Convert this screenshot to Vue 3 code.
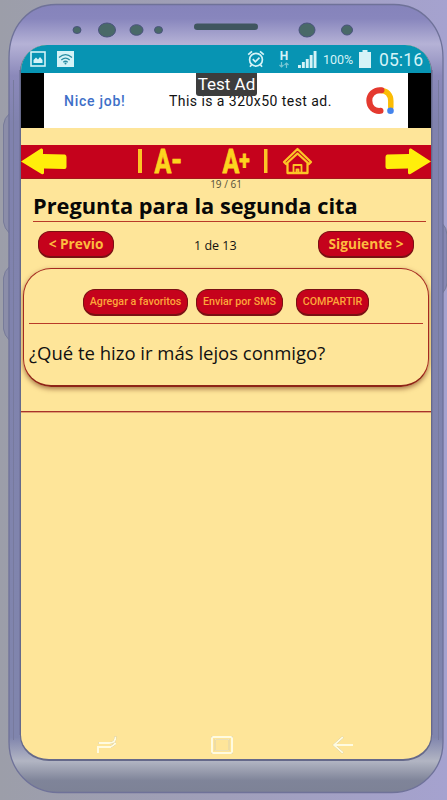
<script setup>
const bars = [3, 6, 9, 13, 17]
const actions = [
  { label: 'Agregar a favoritos', cls: 'fav' },
  { label: 'Enviar por SMS', cls: 'sms' },
  { label: 'COMPARTIR', cls: 'share' },
]
</script>

<template>
  <div class="stage">
    <svg class="body" width="447" height="800" viewBox="0 0 447 800">
      <defs>
        <linearGradient id="bg" x1="0" y1="0" x2="1" y2="0">
          <stop offset="0" stop-color="#9c9ea9" />
          <stop offset=".5" stop-color="#a09fba" />
          <stop offset="1" stop-color="#a5a2cf" />
        </linearGradient>
        <linearGradient id="shell" x1="0" y1="0" x2="0" y2="1">
          <stop offset="0" stop-color="#8583bb" />
          <stop offset=".018" stop-color="#8886bd" />
          <stop offset=".05" stop-color="#b5b2d6" />
          <stop offset=".09" stop-color="#8b89ba" />
          <stop offset=".15" stop-color="#8082ae" />
          <stop offset=".93" stop-color="#8085ad" />
          <stop offset=".96" stop-color="#b2b5c3" />
          <stop offset=".985" stop-color="#7f8499" />
          <stop offset="1" stop-color="#7d8296" />
        </linearGradient>
      </defs>
      <rect width="447" height="800" fill="url(#bg)" />
      <g fill="#8b8da9" stroke="#777b99" stroke-width="1">
        <path d="M10 113Q4 118 3.500 125V222Q4 228 10 234Z" />
        <path d="M10 266Q4 271 3.500 278V329Q4 335 10 341Z" />
        <path d="M442 223Q447 228 447 235V283Q447 288 442 294Z" fill="#8888b3" />
      </g>
      <path d="M56 4.500H394C421 4.500 443 26 443 58V742C443 770 421 792.500 392 792.500H58C30 792.500 9 770 9 742V58C9 26 29 4.500 56 4.500Z" fill="url(#shell)" stroke="#6f7299" stroke-width="1.300" />
      <path d="M13.500 80V740M438.500 80V740" stroke="#777a9d" stroke-width="1" />
      <path d="M20 70V735M432 70V735" stroke="#7779a1" stroke-width="2" />
      <g fill="#496968" stroke="#49547c">
        <ellipse cx="77" cy="30" rx="4" ry="3.500" />
        <ellipse cx="107" cy="30" rx="8.500" ry="7" />
        <ellipse cx="136.500" cy="30" rx="6.500" ry="5.300" />
        <ellipse cx="158.500" cy="30" rx="4" ry="3.500" />
        <ellipse cx="307" cy="30" rx="8" ry="7" />
        <ellipse cx="347" cy="30" rx="5.500" ry="5" />
      </g>
      <rect x="194" y="23.500" width="64" height="6.500" rx="3.200" fill="#40565f" />
    </svg>

    <main class="screen">
      <header class="status">
        <svg class="photo" width="16" height="16" viewBox="0 0 16 16">
          <rect x="1" y="1" width="14" height="14" fill="none" stroke="#d5f3f7" stroke-width="1.600" />
          <path d="M3.500 12V9L6 6.500 8 8.500 10 6 12.500 9V12Z" fill="#d5f3f7" />
        </svg>
        <svg class="wifi" width="17" height="16" viewBox="0 0 17 16">
          <rect width="17" height="16" fill="#d5f3f7" />
          <g fill="none" stroke="#2a8ea3" stroke-width="1.300">
            <path d="M2 6.500Q8.500 .8 15 6.500M4.300 9Q8.500 5.300 12.700 9M6.300 11.200Q8.500 9.300 10.700 11.200" />
          </g>
          <circle cx="8.500" cy="12.500" r="1" fill="#2a8ea3" />
        </svg>
        <svg class="alarm" width="18" height="18" viewBox="0 0 18 18" fill="none" stroke="#d5f3f7" stroke-width="1.700">
          <circle cx="9" cy="9.700" r="6.400" />
          <path d="M5.800 9.200 8.300 11.800 12.500 7.700M1.200 4.600 5 1.300M16.800 4.600 13 1.300M4.700 14.500 3 16.800M13.300 14.500 15 16.800" />
        </svg>
        <div class="net">
          <b>H</b>
          <svg width="10" height="6" viewBox="0 0 10 6" fill="none" stroke="#79c6d3" stroke-width="1.200">
            <path d="M2.500 0V5M.5 3 2.500 5 4.500 3M7.500 6V1M5.500 3 7.500 1 9.500 3" />
          </svg>
        </div>
        <svg class="signal" width="19" height="18" viewBox="0 0 19 18">
          <rect v-for="(h, i) in bars" :key="h" :x="i * 3.900" :y="18 - h" width="2.900" :height="h" fill="#d5f3f7" />
        </svg>
        <span class="pct">100%</span>
        <svg class="batt" width="12" height="18" viewBox="0 0 12 18">
          <path d="M3.500 0H8.500V2H12V18H0V2H3.500Z" fill="#d5f3f7" />
        </svg>
        <span class="clock">05:16</span>
      </header>

      <section class="ad">
        <div class="banner">
          <span class="nice">Nice job!</span>
          <span class="adtext">This is a 320x50 test ad.</span>
          <svg class="admob" width="29" height="28" viewBox="0 0 29 28" fill="none" stroke-linecap="round">
            <path d="M14 3.500C21 3.200 24.800 8 24.800 14V20" stroke="#fbbc04" stroke-width="5.500" />
            <path d="M15.500 3.300C7.500 2.500 3.300 8.300 3.300 13.500 3.300 20 8 24.500 14.500 23.800" stroke="#e4392f" stroke-width="6" />
            <circle cx="24.500" cy="23.800" r="3.300" fill="#4484ec" />
          </svg>
        </div>
        <span class="tag">Test Ad</span>
      </section>

      <nav class="toolbar">
        <svg class="arrow" width="46" height="27" viewBox="0 0 46 27">
          <path d="M0 13.500 20 .5Q22 0 22 2V6L44 6.500Q45.500 7 45.500 9V19Q45.500 21 43.500 21L23 20.500V25Q22.500 27 20.500 26Z" fill="#ffee0b" />
        </svg>
        <svg class="tools" width="182" height="34" viewBox="0 0 182 34">
          <rect x="1" y="4" width="4" height="24" fill="#fcc526" />
          <text transform="translate(17.500 28) scale(.76 1)" class="a">A<tspan class="minus" dy="-1.500">-</tspan></text>
          <text transform="translate(85.500 28) scale(.76 1)" class="a">A<tspan class="plus" dy="-4">+</tspan></text>
          <rect x="127" y="4" width="3.500" height="24" fill="#fcc526" />
          <g fill="none" stroke="#fcc526" stroke-width="2.300" stroke-linejoin="round" stroke-linecap="round">
            <path d="M147 17 160.500 4 174 17 172 19 160.500 8.500 149 19ZM150.500 18.500V28H170.500V18.500" />
            <path d="M156.500 28V20H164.500V28M159.500 28V24.500H161.500V28" stroke-width="1.800" />
          </g>
        </svg>
        <svg class="arrow flip" width="46" height="27" viewBox="0 0 46 27">
          <path d="M0 13.500 20 .5Q22 0 22 2V6L44 6.500Q45.500 7 45.500 9V19Q45.500 21 43.500 21L23 20.500V25Q22.500 27 20.500 26Z" fill="#ffee0b" />
        </svg>
      </nav>

      <div class="page">19 / 61</div>
      <h1>Pregunta para la segunda cita</h1>
      <div class="pager">
        <button class="pill prev">&lt; Previo</button>
        <span class="count">1 de 13</span>
        <button class="pill next">Siguiente &gt;</button>
      </div>

      <article class="card">
        <div class="actions">
          <button v-for="a in actions" :key="a.label" class="pill small" :class="a.cls">{{ a.label }}</button>
        </div>
        <p>¿Qué te hizo ir más lejos conmigo?</p>
      </article>
      <div class="rule"></div>

      <footer class="keys">
        <svg width="24" height="22" viewBox="0 0 24 22"><path d="M3 19V13H15.500L20 10V8.500M3.500 9H14.500Q20.500 9 20.500 2.500" /></svg>
        <svg width="24" height="22" viewBox="0 0 24 22"><rect x="2" y="3" width="20" height="16" rx="1" /><rect x="5" y="5.500" width="14" height="11" class="thin" /></svg>
        <svg width="24" height="22" viewBox="0 0 24 22"><path d="M22 11H3M12 3 3 11 12 19" /></svg>
      </footer>
    </main>
  </div>
</template>

<style>
body { margin: 0; overflow: hidden; }
</style>

<style scoped>
.stage {
  position: relative;
  box-sizing: border-box;
  width: 447px;
  height: 800px;
  padding: 45px 16px 41px 21px;
  overflow: hidden;
  font-family: "Open Sans", sans-serif;
  color: #111;
}
.body { position: absolute; inset: 0; }
.screen {
  position: relative;
  display: flex;
  flex-direction: column;
  width: 410px;
  height: 714px;
  border-radius: 26px 26px 28px 28px / 26px 26px 24px 24px;
  overflow: hidden;
  background: #fee599;
  box-shadow: 0 1px 0 1px #65698a;
}
.status {
  display: flex;
  align-items: center;
  height: 28px;
  flex: none;
  background: #0794b3;
  color: #d5f3f7;
  font-family: Roboto, sans-serif;
  white-space: nowrap;
}
.status > * { flex: none; }
.photo { margin-left: 9px; }
.wifi { margin-left: 11px; }
.alarm { margin-left: 173px; }
.net { display: flex; flex-direction: column; align-items: center; width: 12px; margin-left: 13px; }
.net b { font-size: 12px; line-height: 11px; }
.signal { margin-left: 8px; }
.pct { width: 33px; margin-left: 6px; font-size: 12.500px; }
.batt { margin-left: 3px; }
.clock { margin-left: 8px; margin-top: 1px; font-size: 17.500px; letter-spacing: .1px; }
.ad {
  position: relative;
  display: flex;
  flex: none;
  height: 55px;
  padding: 0 23px;
  background: #000;
}
.banner { display: flex; align-items: center; width: 364px; height: 55px; background: #fff; white-space: nowrap; }
.nice { width: 61px; margin-left: 20px; color: #3e6fc8; font: 500 14px Roboto, sans-serif; letter-spacing: .75px; }
.adtext { width: 162px; margin-left: 44px; font: 14px Roboto, sans-serif; letter-spacing: .45px; }
.admob { margin-left: 35px; }
.tag {
  position: absolute;
  left: 175px;
  top: 0;
  width: 61px;
  height: 23px;
  border-radius: 0 0 3px 3px;
  background: #3d3d3d;
  color: #fff;
  font: 17px/23px Roboto, sans-serif;
  text-align: center;
  white-space: nowrap;
}
.toolbar {
  display: flex;
  flex: none;
  align-items: center;
  height: 33px;
  margin-top: 17px;
  background: #c5021c;
  border-bottom: 1px solid #a5161b;
}
.tools { margin-left: 70px; overflow: visible; }
.flip { margin-left: 66px; transform: scaleX(-1); }
.a { font: 700 33px Roboto, sans-serif; fill: #fdd41f; stroke: #fdd41f; stroke-width: .9px; }
.minus { font-size: 36px; }
.plus { font-size: 25px; }
.page { height: 12px; flex: none; text-align: center; font-size: 10px; line-height: 11px; color: #555038; }
h1 {
  margin: 0 5px 0 12px;
  flex: none;
  height: 30px;
  border-bottom: 2px solid #d08258;
  border-bottom-width: 1px;
  border-bottom-color: #b83a28;
  font-size: 21.800px;
  line-height: 29px;
  font-weight: 700;
  color: #080808;
  white-space: nowrap;
}
.pager { display: flex; flex: none; align-items: center; height: 27px; margin: 9px 17px 0; }
.pill {
  box-sizing: border-box;
  padding: 0 0 1px;
  border: 1.500px solid #7a1013;
  border-bottom-width: 2px;
  border-radius: 12px;
  background: #c5021c;
  color: #fdbb3f;
  font: 700 13.700px "Open Sans", sans-serif;
  white-space: nowrap;
}
.prev { width: 76px; height: 27px; }
.next { width: 96px; height: 27px; margin-left: auto; }
.count { margin-left: 80px; margin-top: 1px; font-size: 12.500px; }
.card {
  box-sizing: border-box;
  flex: none;
  width: 406px;
  height: 119px;
  margin: 10px 0 0 2px;
  padding: 20px 5px 0;
  border: 1px solid #a52a20;
  border-bottom: 2px solid #8e2417;
  border-radius: 28px;
  box-shadow: 0 2px 5px rgba(110, 50, 20, .6);
}
.actions { display: flex; height: 34px; padding-left: 54px; border-bottom: 1px solid #b83a28; }
.small { height: 27px; font: 500 10.700px Roboto, sans-serif; color: #fda63a; }
.fav { width: 105px; }
.sms { width: 87px; margin-left: 8px; }
.share { width: 73px; margin-left: 13px; }
p { margin: 15px 0 0; font-size: 18.500px; line-height: 28px; white-space: nowrap; }
.rule { height: 1px; flex: none; margin-top: 24px; background: #a8322a; border-bottom: 1px solid #e0a070; }
.keys { display: flex; align-items: center; height: 28px; margin-top: auto; padding-left: 74px; }
.keys svg { fill: none; stroke: #fffbe0; stroke-width: 2; filter: drop-shadow(0 0 .7px #a89a6c); }
.keys svg:nth-child(2) { margin-left: 91px; }
.keys svg:nth-child(3) { margin-left: 97px; }
.keys .thin { stroke-width: .6; }
</style>
